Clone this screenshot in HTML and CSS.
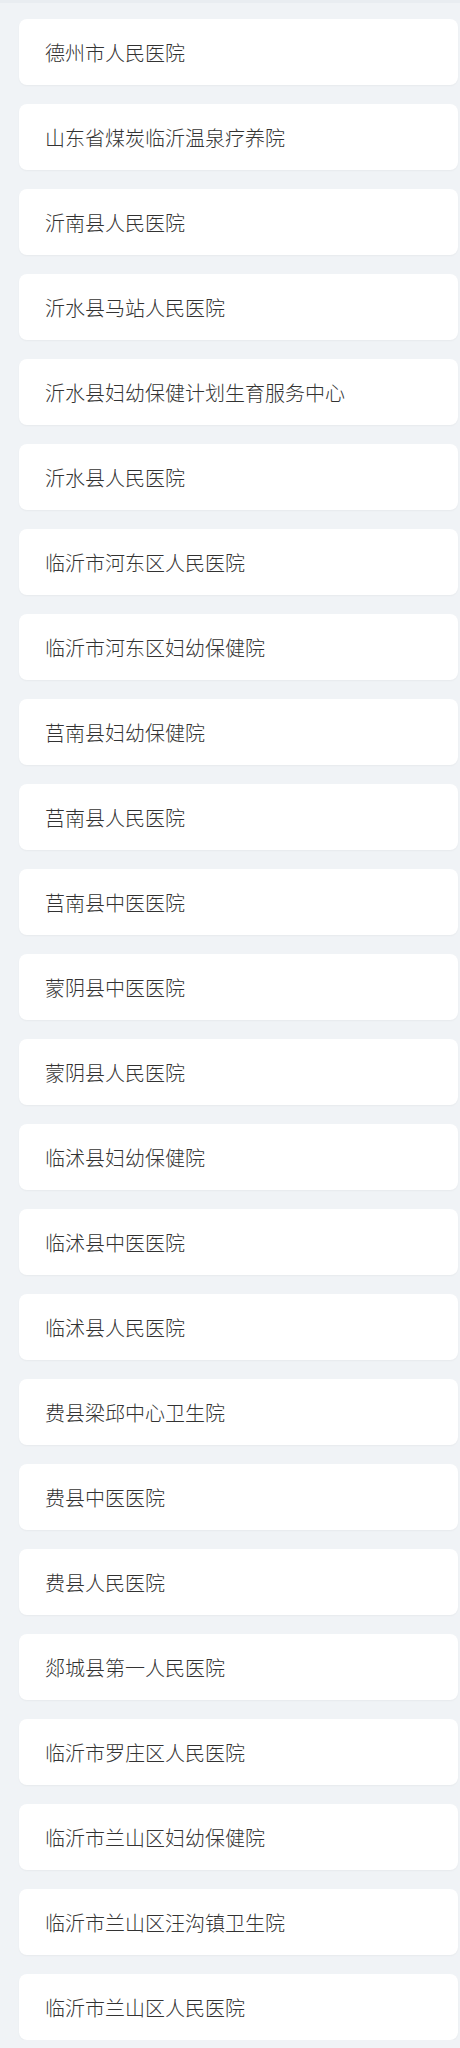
FILE: index.html
```html
<!DOCTYPE html>
<html lang="zh-CN">
<head>
<meta charset="utf-8">
<link rel="stylesheet" href="styles.css">
</head>
<body>
<div class="topbar"></div>
<ul class="list">
<li class="item">德州市人民医院</li>
<li class="item">山东省煤炭临沂温泉疗养院</li>
<li class="item">沂南县人民医院</li>
<li class="item">沂水县马站人民医院</li>
<li class="item">沂水县妇幼保健计划生育服务中心</li>
<li class="item">沂水县人民医院</li>
<li class="item">临沂市河东区人民医院</li>
<li class="item">临沂市河东区妇幼保健院</li>
<li class="item">莒南县妇幼保健院</li>
<li class="item">莒南县人民医院</li>
<li class="item">莒南县中医医院</li>
<li class="item">蒙阴县中医医院</li>
<li class="item">蒙阴县人民医院</li>
<li class="item">临沭县妇幼保健院</li>
<li class="item">临沭县中医医院</li>
<li class="item">临沭县人民医院</li>
<li class="item">费县梁邱中心卫生院</li>
<li class="item">费县中医医院</li>
<li class="item">费县人民医院</li>
<li class="item">郯城县第一人民医院</li>
<li class="item">临沂市罗庄区人民医院</li>
<li class="item">临沂市兰山区妇幼保健院</li>
<li class="item">临沂市兰山区汪沟镇卫生院</li>
<li class="item">临沂市兰山区人民医院</li>
</ul>
</body>
</html>
```
FILE: styles.css
```css
html, body {
  margin: 0;
  padding: 0;
  background: #f0f3f6;
}
body {
  font-family: "Noto Sans CJK SC", "Noto Sans", sans-serif;
}
.topbar {
  height: 3px;
  background: #e9edf1;
}
.list {
  list-style: none;
  margin: 0;
  padding: 16px 2px 0 19px;
  display: flex;
  flex-direction: column;
  gap: 19px;
}
.item {
  height: 66px;
  box-sizing: border-box;
  background: #ffffff;
  border-radius: 8px;
  box-shadow: 0 1px 2px rgba(0, 0, 0, 0.04);
  display: flex;
  align-items: center;
  padding: 2px 0 0 26px;
  font-size: 20px;
  font-weight: 300;
  color: #333333;
  line-height: 1;
}
```
